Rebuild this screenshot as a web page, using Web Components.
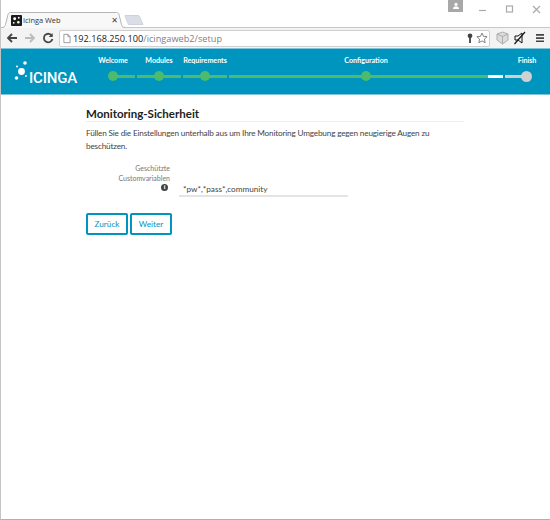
<!DOCTYPE html>
<html lang="de">
<head>
<meta charset="utf-8">
<title>Icinga Web</title>
<style>
  html, body { margin: 0; height: 100%; background: #fff; }
  body { font-family: Lato, "Open Sans", sans-serif; overflow: hidden; }
</style>
</head>
<body>
<browser-frame>
  <browser-tabs title-text="Icinga Web"></browser-tabs>
  <browser-toolbar host-part="192.168.250.100" path-part="/icingaweb2/setup"></browser-toolbar>
  <setup-header>
    <wizard-step label="Welcome" state="first"></wizard-step>
    <wizard-step label="Modules"></wizard-step>
    <wizard-step label="Requirements"></wizard-step>
    <wizard-step label="Configuration" state="current"></wizard-step>
    <wizard-step label="Finish" state="last"></wizard-step>
  </setup-header>
  <setup-page heading="Monitoring-Sicherheit">
    <p>Füllen Sie die Einstellungen unterhalb aus um Ihre Monitoring Umgebung gegen neugierige Augen zu beschützen.</p>
    <form-row slot="form" label="Geschützte Customvariablen" value="*pw*,*pass*,community"></form-row>
    <setup-button slot="buttons">Zurück</setup-button>
    <setup-button slot="buttons">Weiter</setup-button>
  </setup-page>
</browser-frame>

<script>
class BrowserFrame extends HTMLElement {
    constructor() {
        super();
        this.attachShadow({ mode: "open" });
        this.shadowRoot.innerHTML = `
        <style>
            :host {
                display: flex;
                flex-direction: column;
                height: 520px;
                box-sizing: border-box;
                border-left: 1px solid #c4c4c4;
                border-bottom: 1px solid #b0b0b0;
            }
        </style>
        <slot></slot>
        `;
    }
}

class BrowserTabs extends HTMLElement {
    constructor() {
        super();
        this.attachShadow({ mode: "open" });
    }

    connectedCallback() {
        this.shadowRoot.innerHTML = `
        <style>
            :host {
                display: flex;
                align-items: flex-start;
                height: 27px;
                position: relative;
                z-index: 1;
                font-family: "Open Sans", sans-serif;
            }
            .strip {
                flex: 1;
                display: flex;
                align-items: flex-end;
                height: 27px;
                padding-left: 1px;
            }
            .tab {
                position: relative;
                display: flex;
                align-items: center;
                box-sizing: border-box;
                width: 124px;
                height: 16px;
                margin-bottom: -1px;
                padding: 0 8px 0 9px;
                gap: 1px;
                font-size: 7.4px;
                color: #333;
            }
            .shape { position: absolute; left: 0; top: 0; }
            .tab > span, .favicon { position: relative; }
            .favicon { flex: none; display: block; }
            .name { flex: 1; white-space: nowrap; }
            .close { font-size: 8px; color: #444; font-family: "DejaVu Sans", sans-serif; }
            .new { flex: none; margin: 0 0 2px -2px; }
            .controls {
                display: flex;
                align-items: flex-start;
                gap: 15px;
                padding-right: 7px;
            }
            .user {
                width: 15px;
                height: 12px;
                margin-right: -1px;
                background: #a8a8a8;
                display: flex;
                justify-content: center;
                align-items: center;
            }
            .win { margin-top: 3px; width: 12px; height: 12px; }
        </style>
        <div class="strip">
            <div class="tab">
                <svg class="shape" width="124" height="16" viewBox="0 0 124 16">
                    <path d="M0 16c2 0 3-1 3.500-3L6 2.500C6.400 1.200 7 .5 8.500 .5h106c1.500 0 2.100 .7 2.500 2l2.500 10.500c.5 2 1.500 3 3.500 3z" fill="#f8f8f8"/>
                    <path d="M0 15.500c2 0 3-1 3.500-3L6 2.500C6.400 1.200 7 .5 8.500 .5h106c1.500 0 2.100 .7 2.500 2l2.500 10c.5 2 1.500 3 3.500 3" fill="none" stroke="#b4b4b4"/>
                </svg>
                <svg class="favicon" width="11" height="11" viewBox="0 0 12 12">
                    <rect width="12" height="12" rx="1" fill="#1c1c1c"/>
                    <circle cx="4" cy="4" r="1.600" fill="#fff"/>
                    <circle cx="8.500" cy="3" r="1" fill="#fff"/>
                    <circle cx="3" cy="8.500" r="1" fill="#fff"/>
                    <circle cx="8" cy="8" r="1.400" fill="#fff"/>
                </svg>
                <span class="name">${this.getAttribute("title-text")}</span>
                <span class="close">✕</span>
            </div>
            <svg class="new" width="20" height="10" viewBox="0 0 20 10" fill="#dadee7" stroke="#cfd2da">
                <path d="M1 .5h13c.8 0 1.200 .4 1.500 1L19 9.500H4.500L1 1z"/>
            </svg>
        </div>
        <div class="controls">
            <div class="user">
                <svg width="8" height="8" viewBox="0 0 8 8" fill="#fff">
                    <circle cx="4" cy="2.400" r="1.600"/>
                    <path d="M1 7c0-2 1.400-2.500 3-2.500S7 5 7 7z"/>
                </svg>
            </div>
            <svg class="win" viewBox="0 0 12 12" fill="none" stroke="#aaa" stroke-width="1.200"><path d="M2 7.500h7"/></svg>
            <svg class="win" viewBox="0 0 12 12" fill="none" stroke="#aaa" stroke-width="1.200"><rect x="2.500" y="3" width="6" height="6"/></svg>
            <svg class="win" viewBox="0 0 12 12" fill="none" stroke="#aaa" stroke-width="1.200"><path d="M2 3l7 7M9 3l-7 7"/></svg>
        </div>
        `;
    }
}

class BrowserToolbar extends HTMLElement {
    constructor() {
        super();
        this.attachShadow({ mode: "open" });
    }

    connectedCallback() {
        this.shadowRoot.innerHTML = `
        <style>
            :host {
                display: flex;
                align-items: center;
                box-sizing: border-box;
                height: 21px;
                padding: 0 5px;
                gap: 5px;
                background: #f3f3f3;
                border-top: 1px solid #c8c8c8;
                font-family: "Open Sans", sans-serif;
            }
            .nav { display: flex; align-items: center; gap: 6px; }
            svg { display: block; flex: none; }
            .omni {
                flex: 1;
                display: flex;
                align-items: center;
                box-sizing: border-box;
                height: 17px;
                gap: 2px;
                padding: 0 1px 0 3px;
                background: #fff;
                border: 1px solid #cfcfcf;
                border-radius: 2px;
                font-size: 9.200px;
                white-space: nowrap;
            }
            .host { color: #222; }
            .path { color: #808080; }
            .url { flex: 1; }
            .tools { display: flex; align-items: center; gap: 4px; margin-left: 1px; }
            .tools svg:last-child { margin-left: 5px; }
        </style>
        <div class="nav">
            <svg width="12" height="12" viewBox="0 0 12 12" fill="none" stroke="#444" stroke-width="1.800"><path d="M11 6H2M6 2L2 6l4 4"/></svg>
            <svg width="12" height="12" viewBox="0 0 12 12" fill="none" stroke="#bbb" stroke-width="1.800"><path d="M1 6h9M6 2l4 4-4 4"/></svg>
            <svg width="12" height="12" viewBox="0 0 12 12" fill="none" stroke="#444" stroke-width="1.800"><path d="M10 4a4.300 4.300 0 1 0 .4 3"/><path d="M10.600 1v4H6.800z" fill="#444" stroke="none"/></svg>
        </div>
        <div class="omni">
            <svg width="8" height="11" viewBox="0 0 9 11" fill="#fff" stroke="#888" stroke-width=".9"><path d="M1 .8h4.500L8 3.400v6.800H1zM5.500 .8v2.600H8"/></svg>
            <span class="url"><span class="host">${this.getAttribute("host-part")}</span><span class="path">${this.getAttribute("path-part")}</span></span>
            <svg width="8" height="11" viewBox="0 0 8 11" fill="#444"><circle cx="4" cy="2.800" r="2.400"/><path d="M3.100 4h1.800v6H3.100z"/></svg>
            <svg width="12" height="12" viewBox="0 0 12 12" fill="none" stroke="#777" stroke-width=".9"><path d="M6 1l1.500 3.300 3.600 .4-2.700 2.400 .8 3.600L6 8.900l-3.200 1.800 .8-3.600L.9 4.700l3.600-.4z"/></svg>
        </div>
        <div class="tools">
            <svg width="13" height="14" viewBox="0 0 13 14" fill="#dcdcdc" stroke="#a8a8a8" stroke-width=".9"><path d="M6.500 1l5.500 2v6l-5.500 4L1 9V3z"/><path d="M1 3l5.500 2.500L12 3M6.500 5.500V13" fill="none"/></svg>
            <svg width="13" height="14" viewBox="0 0 13 14" stroke="#111" stroke-width="1.200" fill="none"><path d="M12 1L1.500 13"/><path d="M2 5h3l4-3v10L5 9H2z" stroke-width="1"/></svg>
            <svg width="10" height="10" viewBox="0 0 10 10" fill="#444"><path d="M1 1h8v1.700H1zM1 4.200h8v1.700H1zM1 7.400h8v1.700H1z"/></svg>
        </div>
        `;
    }
}

class SetupHeader extends HTMLElement {
    constructor() {
        super();
        this.attachShadow({ mode: "open" });
        this.shadowRoot.innerHTML = `
        <style>
            :host {
                display: flex;
                box-sizing: border-box;
                height: 47px;
                background: #0095bf;
                border-top: 1px solid #7fc4da;
                border-bottom: 1px solid #7fc4da;
                padding-right: 1px;
            }
            .logo {
                flex: none;
                width: 90px;
                box-sizing: border-box;
                padding: 12px 0 0 13px;
                display: flex;
                align-items: flex-start;
            }
            .word {
                font: 500 15px/1 Roboto, sans-serif;
                color: #fff;
                margin-top: 9.500px;
                letter-spacing: -.2px;
            }
            nav {
                flex: 1;
                display: grid;
                grid-template-columns: 44px 44px 44px 1fr 44px;
                column-gap: 2px;
            }
        </style>
        <div class="logo">
            <svg width="15" height="22" viewBox="0 0 15 22" fill="#fff" style="flex:none">
                <circle cx="7.500" cy="10.500" r="3.400"/>
                <circle cx="11" cy="2" r="1.800"/>
                <circle cx="3" cy="5.500" r="1"/>
                <circle cx="2.500" cy="17" r="1.800"/>
                <circle cx="12" cy="15" r=".9"/>
            </svg>
            <span class="word">ICINGA</span>
        </div>
        <nav><slot></slot></nav>
        `;
    }
}

class WizardStep extends HTMLElement {
    constructor() {
        super();
        this.attachShadow({ mode: "open" });
    }

    connectedCallback() {
        this.shadowRoot.innerHTML = `
        <style>
            :host {
                display: flex;
                flex-direction: column;
                align-items: center;
                padding-top: 6px;
                font: 700 7.100px/12px Lato, sans-serif;
                color: #fff;
            }
            .track {
                position: relative;
                width: 100%;
                height: 11px;
                margin-top: 4px;
                display: flex;
                align-items: center;
            }
            .line { width: 100%; height: 3px; background: #4cbb6c; }
            .dot {
                position: absolute;
                left: 50%;
                top: 0;
                margin-left: -5px;
                width: 10px;
                height: 10px;
                border-radius: 50%;
                background: #4cbb6c;
            }
            :host([state="first"]) .line { margin-left: 50%; width: 50%; }
            :host([state="current"]) .line {
                background: linear-gradient(to right, #4cbb6c 94.500%, #fff 94.500%);
            }
            :host([state="last"]) .line { width: 50%; background: #d0d0d0; }
            :host([state="last"]) .dot { background: #d0d0d0; width: 11px; height: 11px; margin-left: -6px; }
            span { white-space: nowrap; }
        </style>
        <span>${this.getAttribute("label")}</span>
        <div class="track"><div class="line"></div><div class="dot"></div></div>
        `;
    }
}

class SetupPage extends HTMLElement {
    constructor() {
        super();
        this.attachShadow({ mode: "open" });
    }

    connectedCallback() {
        this.shadowRoot.innerHTML = `
        <style>
            :host {
                display: block;
                flex: 1;
                padding: 11px 0 0 85px;
                background: #fff;
                color: #444;
                font: 8.200px/13px Lato, sans-serif;
            }
            h1 {
                margin: 0;
                width: 378px;
                font: 700 11.500px/15px Lato, sans-serif;
                color: #222;
                border-bottom: 1px solid #eee;
            }
            .intro { width: 350px; margin: 5px 0 11px; letter-spacing: -.17px; }
            ::slotted(p) { margin: 0; }
            .buttons { display: flex; gap: 2px; margin-top: 16px; }
        </style>
        <h1>${this.getAttribute("heading")}</h1>
        <div class="intro"><slot></slot></div>
        <slot name="form"></slot>
        <div class="buttons"><slot name="buttons"></slot></div>
        `;
    }
}

class FormRow extends HTMLElement {
    constructor() {
        super();
        this.attachShadow({ mode: "open" });
    }

    connectedCallback() {
        this.shadowRoot.innerHTML = `
        <style>
            :host {
                display: flex;
                align-items: flex-start;
                gap: 9px;
            }
            .label {
                width: 84px;
                text-align: right;
                color: #777;
                font-size: 7px;
                line-height: 9.500px;
            }
            .info {
                display: inline-block;
                width: 7px;
                height: 7px;
                margin: 1px 2px 0 0;
                border-radius: 50%;
                background: #444;
                color: #fff;
                font: 700 6px/7px "Liberation Serif", serif;
                text-align: center;
                vertical-align: top;
            }
            .value {
                width: 169px;
                box-sizing: border-box;
                height: 14px;
                margin-top: 19px;
                padding-left: 4px;
                border-bottom: 2px solid #e4e4e4;
                color: #444;
                line-height: 12px;
            }
        </style>
        <div class="label">${this.getAttribute("label")}<br><span class="info">i</span></div>
        <div class="value">${this.getAttribute("value")}</div>
        `;
    }
}

class SetupButton extends HTMLElement {
    constructor() {
        super();
        this.attachShadow({ mode: "open" });
        this.shadowRoot.innerHTML = `
        <style>
            :host {
                display: flex;
                align-items: center;
                justify-content: center;
                box-sizing: border-box;
                width: 42px;
                height: 22px;
                border: 2px solid #0095bf;
                border-radius: 2px;
                color: #0095bf;
            }
        </style>
        <slot></slot>
        `;
    }
}

customElements.define("browser-frame", BrowserFrame);
customElements.define("browser-tabs", BrowserTabs);
customElements.define("browser-toolbar", BrowserToolbar);
customElements.define("setup-header", SetupHeader);
customElements.define("wizard-step", WizardStep);
customElements.define("setup-page", SetupPage);
customElements.define("form-row", FormRow);
customElements.define("setup-button", SetupButton);
</script>
</body>
</html>
